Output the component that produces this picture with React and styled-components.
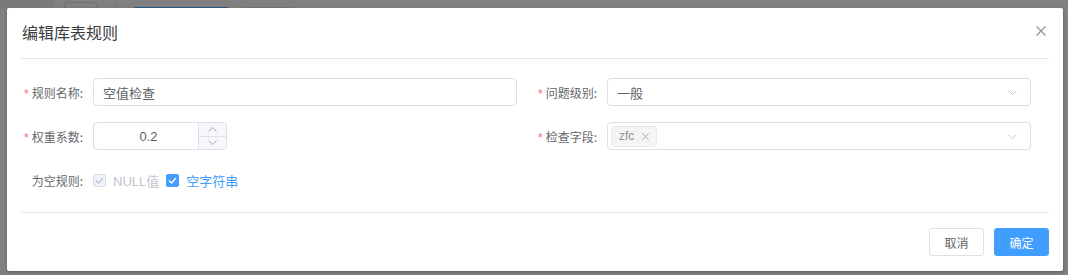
import React from "react";
import styled, { createGlobalStyle } from "styled-components";

const GlobalStyle = createGlobalStyle`
  html, body { margin: 0; padding: 0; background: #808080; }
  body {
    font-family: "Liberation Sans", "Noto Sans CJK SC", Arial, sans-serif;
    -webkit-font-smoothing: antialiased;
  }
  * { box-sizing: border-box; }
`;

const Page = styled.div`
  width: 1068px;
  height: 275px;
  overflow: hidden;
  background: #808080;
`;

const BackStrip = styled.div`
  height: 8px;
  display: flex;
  align-items: flex-start;
  overflow: hidden;
`;

const BackBlock = styled.div`
  flex: none;
  width: ${(p) => p.$w}px;
  height: ${(p) => p.$h || 20}px;
  margin-left: ${(p) => p.$ml || 0}px;
  margin-top: ${(p) => p.$mt || 0}px;
  background: ${(p) => p.$bg || "transparent"};
  border: ${(p) => (p.$border ? "1px solid #707070" : "none")};
  border-radius: ${(p) => p.$r || 0}px;
`;

const Dialog = styled.div`
  width: 1056px;
  height: 263px;
  margin-left: 7px;
  background: #fff;
  border-radius: 2px;
  box-shadow: 0 1px 3px rgba(0, 0, 0, 0.3);
  padding: 0 14px;
  display: flex;
  flex-direction: column;
`;

const Header = styled.div`
  height: 51px;
  border-bottom: 1px solid #e4e7ed;
  display: flex;
  align-items: center;
  justify-content: space-between;
  padding-bottom: 2px;
`;

const Title = styled.span`
  font-size: 16px;
  line-height: 24px;
  color: #3a3c40;
  padding-left: 1px;
  font-family: "Noto Sans CJK SC", sans-serif;
`;

const CloseBtn = styled.button`
  border: none;
  background: transparent;
  padding: 0;
  margin: 0 3px 2px 0;
  width: 10px;
  height: 10px;
  display: flex;
  cursor: pointer;
`;

const Form = styled.div`
  display: grid;
  grid-template-columns: 1fr 1fr;
  row-gap: 16px;
  padding: 19px 0 18px;
`;

const FormItem = styled.div`
  display: flex;
  align-items: center;
  height: 28px;
  padding-right: 18px;
`;

const Label = styled.label`
  flex: none;
  width: 72px;
  padding-right: 10px;
  text-align: right;
  font-size: 12px;
  color: #65676c;
  font-family: "Noto Sans CJK SC", sans-serif;
  white-space: nowrap;
`;

const Star = styled.span`
  color: #f56c6c;
  margin-right: 3px;
  font-family: "Liberation Sans", sans-serif;
`;

const Field = styled.div`
  flex: 1;
  height: 28px;
  border: 1px solid #dcdfe6;
  border-radius: 4px;
  display: flex;
  align-items: center;
  padding: 0 10px 0 9px;
  font-size: 13px;
  color: #606266;
  background: #fff;
`;

const FieldText = styled.span`
  flex: 1;
  font-family: "Noto Sans CJK SC", sans-serif;
`;

const SelectField = styled(Field)`
  padding: 0 13px 0 3px;
  justify-content: space-between;
`;

const SelectText = styled(FieldText)`
  padding-left: 6px;
`;

const Tag = styled.span`
  height: 21px;
  display: inline-flex;
  align-items: center;
  padding: 0 4px 0 7px;
  background: #f4f4f5;
  border: 1px solid #e9e9eb;
  border-radius: 4px;
  font-size: 12px;
  color: #909399;
`;

const TagClose = styled.span`
  width: 14px;
  height: 14px;
  margin-left: 4px;
  display: inline-flex;
  align-items: center;
  justify-content: center;
`;

const NumberBox = styled.div`
  flex: none;
  width: 134px;
  height: 28px;
  border: 1px solid #dcdfe6;
  border-radius: 4px;
  display: flex;
  overflow: hidden;
`;

const NumberValue = styled.div`
  flex: 1;
  display: flex;
  align-items: center;
  justify-content: center;
  padding-left: 5px;
  font-size: 13px;
  color: #606266;
`;

const Controls = styled.div`
  flex: none;
  width: 28px;
  border-left: 1px solid #dcdfe6;
  background: #f5f7fa;
  display: flex;
  flex-direction: column;
`;

const ControlBtn = styled.div`
  flex: 1;
  display: flex;
  align-items: center;
  justify-content: center;
  border-top: ${(p) => (p.$bottom ? "1px solid #dcdfe6" : "none")};
`;

const CheckGroup = styled.div`
  display: flex;
  align-items: center;
`;

const CheckItem = styled.label`
  display: inline-flex;
  align-items: center;
  margin-right: 7px;
  font-size: 13px;
  color: ${(p) => (p.$disabled ? "#c0c4cc" : "#409eff")};
`;

const Box = styled.span`
  width: 13px;
  height: 13px;
  border-radius: 2px;
  border: 1px solid ${(p) => (p.$disabled ? "#dcdfe6" : "#409eff")};
  background: ${(p) => (p.$disabled ? "#edf2fc" : "#409eff")};
  display: inline-flex;
  align-items: center;
  justify-content: center;
  margin-right: 7px;
`;

const CheckText = styled.span`
  font-family: "Liberation Sans", "Noto Sans CJK SC", sans-serif;
`;

const Footer = styled.div`
  border-top: 1px solid #e4e7ed;
  padding-top: 15px;
  display: flex;
  justify-content: flex-end;
  gap: 10px;
`;

const Button = styled.button`
  width: 55px;
  height: 28px;
  padding: 0;
  border-radius: 3px;
  font-size: 12px;
  font-family: "Noto Sans CJK SC", sans-serif;
  cursor: pointer;
  border: 1px solid ${(p) => (p.$primary ? "#409eff" : "#dcdfe6")};
  background: ${(p) => (p.$primary ? "#409eff" : "#fff")};
  color: ${(p) => (p.$primary ? "#fff" : "#606266")};
`;

const Chevron = ({ up, color = "#c0c4cc", w = 9, h = 5 }) => (
  <svg width={w} height={h} viewBox="0 0 9 5" fill="none">
    <path
      d={up ? "M0.5 4.5 L4.5 0.5 L8.5 4.5" : "M0.5 0.5 L4.5 4.5 L8.5 0.5"}
      stroke={color}
      strokeWidth="1"
    />
  </svg>
);

const Check = ({ color }) => (
  <svg width="9" height="7" viewBox="0 0 9 7" fill="none">
    <path d="M1 3.5 L3.5 6 L8 1" stroke={color} strokeWidth="1.3" />
  </svg>
);

const Cross = ({ size = 10, color = "#909399", sw = 1.2 }) => (
  <svg width={size} height={size} viewBox="0 0 10 10" fill="none">
    <path d="M0.5 0.5 L9.5 9.5 M9.5 0.5 L0.5 9.5" stroke={color} strokeWidth={sw} />
  </svg>
);

export default function App() {
  return (
    <Page>
      <GlobalStyle />
      <BackStrip>
        <BackBlock $w={54} $h={8} $bg="#7a7a7a" />
        <BackBlock $w={33} $mt={2} $ml={10} $border $r={3} />
        <BackBlock $w={1} $h={8} $ml={18} $bg="#787878" />
        <BackBlock $w={96} $mt={7} $ml={17} $bg="#245684" $r={3} />
        <BackBlock $w={51} $mt={7} $ml={13} $border $r={3} />
      </BackStrip>
      <Dialog>
        <Header>
          <Title>编辑库表规则</Title>
          <CloseBtn aria-label="close">
            <Cross />
          </CloseBtn>
        </Header>
        <Form>
          <FormItem>
            <Label>
              <Star>*</Star>规则名称:
            </Label>
            <Field>
              <FieldText>空值检查</FieldText>
            </Field>
          </FormItem>
          <FormItem>
            <Label>
              <Star>*</Star>问题级别:
            </Label>
            <SelectField>
              <SelectText>一般</SelectText>
              <Chevron />
            </SelectField>
          </FormItem>
          <FormItem>
            <Label>
              <Star>*</Star>权重系数:
            </Label>
            <NumberBox>
              <NumberValue>0.2</NumberValue>
              <Controls>
                <ControlBtn>
                  <Chevron up color="#a8abb2" />
                </ControlBtn>
                <ControlBtn $bottom>
                  <Chevron color="#a8abb2" />
                </ControlBtn>
              </Controls>
            </NumberBox>
          </FormItem>
          <FormItem>
            <Label>
              <Star>*</Star>检查字段:
            </Label>
            <SelectField>
              <Tag>
                zfc
                <TagClose>
                  <Cross size={7} color="#909399" sw={1.1} />
                </TagClose>
              </Tag>
              <Chevron />
            </SelectField>
          </FormItem>
          <FormItem>
            <Label>为空规则:</Label>
            <CheckGroup>
              <CheckItem $disabled>
                <Box $disabled>
                  <Check color="#c0c4cc" />
                </Box>
                <CheckText>NULL值</CheckText>
              </CheckItem>
              <CheckItem>
                <Box>
                  <Check color="#fff" />
                </Box>
                <CheckText>空字符串</CheckText>
              </CheckItem>
            </CheckGroup>
          </FormItem>
        </Form>
        <Footer>
          <Button>取消</Button>
          <Button $primary>确定</Button>
        </Footer>
      </Dialog>
    </Page>
  );
}
